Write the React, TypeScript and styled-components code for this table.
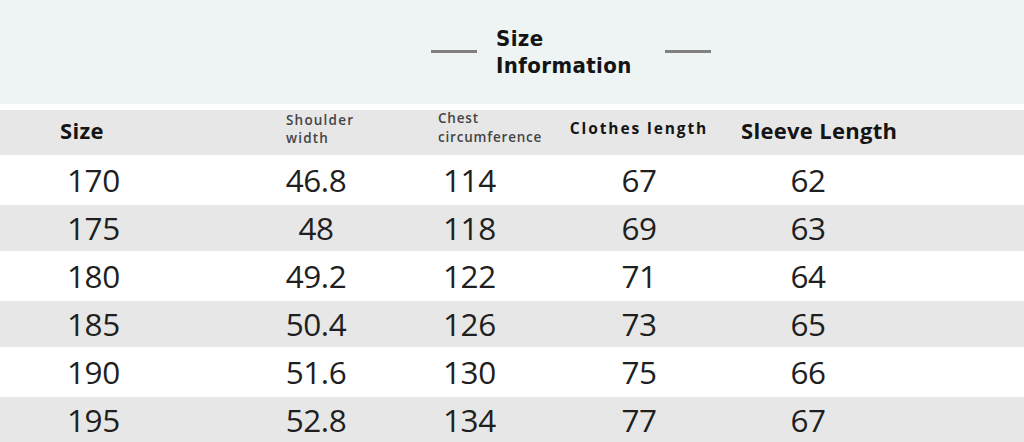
import React from 'react';
import styled, { createGlobalStyle } from 'styled-components';

const GlobalStyle = createGlobalStyle`
  html, body {
    margin: 0;
    padding: 0;
    background: #ffffff;
  }
  body {
    width: 1024px;
    height: 442px;
    overflow: hidden;
    font-family: 'Open Sans', 'Liberation Sans', sans-serif;
  }
`;

const Page = styled.div`
  width: 1024px;
  display: flex;
  flex-direction: column;
`;

const Banner = styled.div`
  height: 104px;
  background: #eef3f3;
  display: flex;
  align-items: center;
  padding-left: 431px;
  box-sizing: border-box;
  margin-bottom: 6px;
`;

const Rule = styled.div`
  width: 46px;
  height: 3px;
  background: #808080;
  margin-bottom: 1px;
`;

const Title = styled.h1`
  margin: 0 0 0 19px;
  width: 169px;
  font-family: 'DejaVu Sans Condensed', 'DejaVu Sans', sans-serif;
  font-stretch: condensed;
  font-weight: 700;
  font-size: 22px;
  line-height: 27px;
  color: #141414;
  letter-spacing: 0.4px;
`;

const COLUMNS = '230px 172px 144px 186px 152px 1fr';

const Row = styled.div<{ $shade: boolean; $height: number }>`
  display: grid;
  grid-template-columns: ${COLUMNS};
  align-items: center;
  box-sizing: border-box;
  height: ${p => p.$height}px;
  background: ${p => (p.$shade ? '#e7e7e7' : '#ffffff')};
`;

const HeaderRow = styled(Row)`
  padding-bottom: 6px;
`;

const Cell = styled.div<{ $align?: 'left' | 'center'; $pad?: number; $shift?: number }>`
  text-align: ${p => p.$align ?? 'left'};
  padding-left: ${p => p.$pad ?? 0}px;
  margin-top: ${p => p.$shift ?? 0}px;
  white-space: nowrap;
`;

const Value = styled(Cell)`
  font-size: 31.5px;
  line-height: 1;
  color: #1f1f1f;
  letter-spacing: -0.4px;
`;

const BigLabel = styled(Cell)`
  font-weight: 700;
  font-size: 22px;
  color: #151515;
  letter-spacing: 0.3px;
`;

const MidLabel = styled(Cell)`
  font-weight: 700;
  font-size: 15.5px;
  color: #151515;
  letter-spacing: 1.9px;
`;

const SmallLabel = styled(Cell)<{ $spacing: number; $leading: number }>`
  font-weight: 600;
  font-size: 13.5px;
  line-height: ${p => p.$leading}px;
  color: #444444;
  letter-spacing: ${p => p.$spacing}px;
`;

const rows = [
  ['170', '46.8', '114', '67', '62'],
  ['175', '48', '118', '69', '63'],
  ['180', '49.2', '122', '71', '64'],
  ['185', '50.4', '126', '73', '65'],
  ['190', '51.6', '130', '75', '66'],
  ['195', '52.8', '134', '77', '67'],
];

export default function App() {
  return (
    <Page>
      <GlobalStyle />
      <Banner>
        <Rule />
        <Title>
          Size
          <br />
          Information
        </Title>
        <Rule />
      </Banner>

      <HeaderRow $shade $height={45}>
        <BigLabel $pad={60}>Size</BigLabel>
        <SmallLabel $pad={56} $spacing={1.2} $leading={17.5}>
          Shoulder
          <br />
          width
        </SmallLabel>
        <SmallLabel $pad={36} $spacing={0.8} $leading={18.5} $shift={-4}>
          Chest
          <br />
          circumference
        </SmallLabel>
        <MidLabel $align="center" $shift={-4}>Clothes length</MidLabel>
        <BigLabel $pad={9}>Sleeve Length</BigLabel>
        <div />
      </HeaderRow>

      {rows.map((r, i) => (
        <Row key={r[0]} $shade={i % 2 === 1} $height={i % 2 === 1 ? 46 : 50}>
          <Value $pad={67}>{r[0]}</Value>
          <Value $align="center">{r[1]}</Value>
          <Value $pad={41}>{r[2]}</Value>
          <Value $align="center">{r[3]}</Value>
          <Value $align="center">{r[4]}</Value>
          <div />
        </Row>
      ))}
    </Page>
  );
}
